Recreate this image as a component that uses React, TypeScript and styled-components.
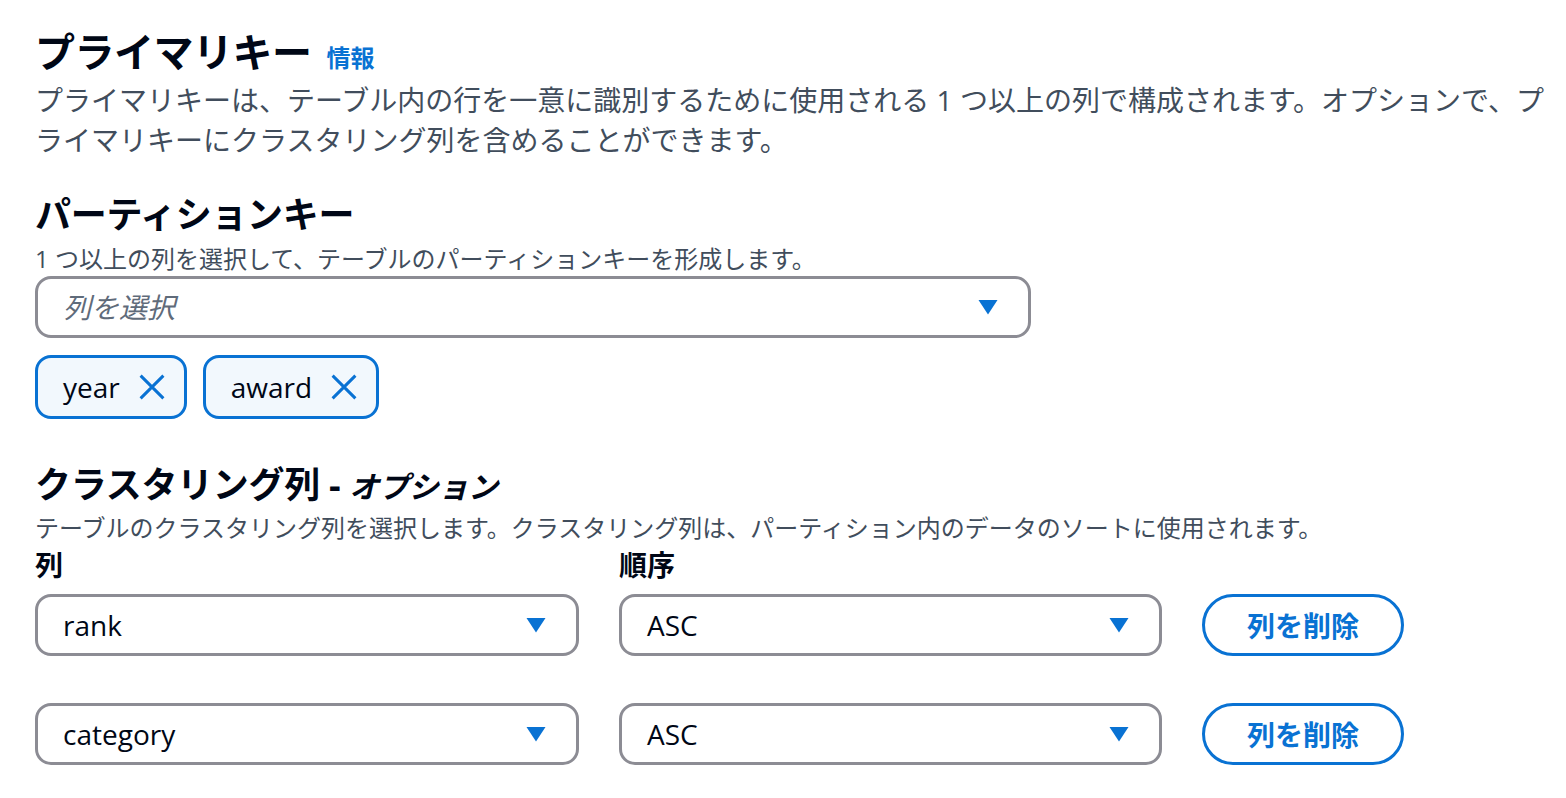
import React from "react";
import styled, { createGlobalStyle } from "styled-components";

const GlobalStyle = createGlobalStyle`
  html, body {
    margin: 0;
    padding: 0;
    background: #ffffff;
  }
  body {
    font-family: "Open Sans", "Noto Sans CJK JP", sans-serif;
    color: #000716;
    overflow: hidden;
  }
`;

const FONT = `"Open Sans", "Noto Sans CJK JP", sans-serif`;
const BLUE = "#0972d3";

const Page = styled.div`
  display: flex;
  flex-direction: column;
  padding: 28px 0 0 35px;
  width: 1531px;
  font-family: ${FONT};
`;

const Section = styled.section<{ $top?: number }>`
  display: flex;
  flex-direction: column;
  margin-top: ${(p) => p.$top ?? 0}px;
`;

const TitleRow = styled.div`
  display: flex;
  align-items: baseline;
  gap: 15px;
`;

const H2 = styled.h2`
  margin: 0;
  font-size: 40px;
  line-height: 48px;
  font-weight: 700;
  color: #000716;
  letter-spacing: -0.5px;
`;

const InfoLink = styled.a`
  font-size: 24px;
  line-height: 32px;
  font-weight: 700;
  color: ${BLUE};
  text-decoration: none;
`;

const H3 = styled.h3`
  margin: 0;
  height: 44px;
  font-size: 36px;
  line-height: 44px;
  font-weight: 700;
  color: #000716;
  letter-spacing: -0.3px;
`;

const Optional = styled.i`
  font-style: italic;
  font-weight: 700;
  font-size: 30px;
  line-height: 1;
`;

const Description = styled.p<{ $size: number; $lh: number; $top: number }>`
  margin: ${(p) => p.$top}px 0 0;
  font-size: ${(p) => p.$size}px;
  line-height: ${(p) => p.$lh}px;
  color: #414d5c;
`;

const SelectBox = styled.div<{ $width: number }>`
  box-sizing: border-box;
  width: ${(p) => p.$width}px;
  height: 62px;
  border: 3px solid #8c8c94;
  border-radius: 16px;
  display: flex;
  align-items: center;
  justify-content: space-between;
  padding: 0 30px 0 25px;
  background: #fff;
`;

const SelectValue = styled.span<{ $placeholder?: boolean }>`
  font-size: 28px;
  line-height: 36px;
  color: ${(p) => (p.$placeholder ? "#5f6b7a" : "#000716")};
  font-style: ${(p) => (p.$placeholder ? "italic" : "normal")};
`;

const SelectSlot = styled.div`
  margin-top: 1px;
`;

const TokenList = styled.div`
  display: flex;
  gap: 16px;
  margin-top: 17px;
`;

const Token = styled.div`
  box-sizing: border-box;
  height: 64px;
  display: flex;
  align-items: center;
  gap: 16px;
  padding: 0 16px 0 25px;
  border: 3px solid ${BLUE};
  border-radius: 16px;
  background: #f2f8fd;
  font-size: 28px;
  color: #000716;
`;

const Grid = styled.div`
  display: grid;
  grid-template-columns: 544px 543px 202px;
  column-gap: 40px;
  row-gap: 0;
  margin-top: 3px;
  align-items: center;
`;

const Label = styled.div`
  font-size: 28px;
  line-height: 36px;
  font-weight: 700;
  color: #000716;
`;

const RowGap = styled.div<{ $h: number }>`
  grid-column: 1 / -1;
  height: ${(p) => p.$h}px;
`;

const RemoveButton = styled.button`
  box-sizing: border-box;
  height: 62px;
  width: 202px;
  border: 3px solid ${BLUE};
  border-radius: 31px;
  background: #fff;
  color: ${BLUE};
  font-family: ${FONT};
  font-size: 28px;
  font-weight: 700;
  cursor: pointer;
  padding: 0;
`;

const Caret = () => (
  <svg width="20" height="16" viewBox="0 0 20 16" aria-hidden>
    <polygon points="0.5,1 19.5,1 10,15.5" fill={BLUE} />
  </svg>
);

const CloseIcon = () => (
  <svg width="32" height="32" viewBox="0 0 16 16" aria-hidden>
    <path d="m2.3 2.3 11.4 11.4M13.7 2.3 2.3 13.7" stroke={BLUE} strokeWidth="1.5" fill="none" />
  </svg>
);

const Select = ({ width, value, placeholder }: { width: number; value?: string; placeholder?: string }) => (
  <SelectBox $width={width}>
    {value ? <SelectValue>{value}</SelectValue> : <SelectValue $placeholder>{placeholder}</SelectValue>}
    <Caret />
  </SelectBox>
);

const rows = [
  { col: "rank", order: "ASC" },
  { col: "category", order: "ASC" },
];

export default function App() {
  return (
    <>
      <GlobalStyle />
      <Page>
        <Section>
          <TitleRow>
            <H2>プライマリキー</H2>
            <InfoLink href="#">情報</InfoLink>
          </TitleRow>
          <Description $size={28} $lh={40} $top={4}>
            プライマリキーは、テーブル内の行を一意に識別するために使用される 1 つ以上の列で構成されます。オプションで、プライマリキーにクラスタリング列を含めることができます。
          </Description>
        </Section>

        <Section $top={33}>
          <H3>パーティションキー</H3>
          <Description $size={24} $lh={32} $top={6}>
            1 つ以上の列を選択して、テーブルのパーティションキーを形成します。
          </Description>
          <SelectSlot>
            <Select width={996} placeholder="列を選択" />
          </SelectSlot>
          <TokenList>
            {["year", "award"].map((t) => (
              <Token key={t}>
                <span>{t}</span>
                <CloseIcon />
              </Token>
            ))}
          </TokenList>
        </Section>

        <Section $top={44}>
          <H3>
            クラスタリング列 - <Optional>オプション</Optional>
          </H3>
          <Description $size={24} $lh={32} $top={5}>
            テーブルのクラスタリング列を選択します。クラスタリング列は、パーティション内のデータのソートに使用されます。
          </Description>
          <Grid>
            <Label>列</Label>
            <Label>順序</Label>
            <div />
            <RowGap $h={11} />
            {rows.map((r, i) => (
              <React.Fragment key={r.col}>
                {i > 0 && <RowGap $h={47} />}
                <Select width={544} value={r.col} />
                <Select width={543} value={r.order} />
                <RemoveButton>列を削除</RemoveButton>
              </React.Fragment>
            ))}
          </Grid>
        </Section>
      </Page>
    </>
  );
}
